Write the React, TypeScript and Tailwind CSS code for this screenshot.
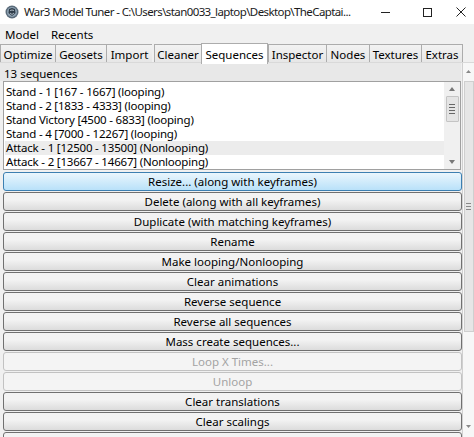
import React from "react";

const tabs = [
  { label: "Optimize", w: 55 },
  { label: "Geosets", w: 51 },
  { label: "Import", w: 46 },
  { label: "Cleaner", w: 47, ml: 2 },
  { label: "Sequences", w: 67, selected: true },
  { label: "Inspector", w: 58 },
  { label: "Nodes", w: 43 },
  { label: "Textures", w: 52 },
  { label: "Extras", w: 41 },
];

const items = [
  "Stand - 1 [167 - 1667] (looping)",
  "Stand - 2 [1833 - 4333] (looping)",
  "Stand Victory [4500 - 6833] (looping)",
  "Stand - 4 [7000 - 12267] (looping)",
  "Attack - 1 [12500 - 13500] (Nonlooping)",
  "Attack - 2 [13667 - 14667] (Nonlooping)",
];

const buttons: { label: string; state?: "hover" | "disabled" }[] = [
  { label: "Resize... (along with keyframes)", state: "hover" },
  { label: "Delete (along with all keyframes)" },
  { label: "Duplicate (with matching keyframes)" },
  { label: "Rename" },
  { label: "Make looping/Nonlooping" },
  { label: "Clear animations" },
  { label: "Reverse sequence" },
  { label: "Reverse all sequences" },
  { label: "Mass create sequences..." },
  { label: "Loop X Times...", state: "disabled" },
  { label: "Unloop", state: "disabled" },
  { label: "Clear translations" },
  { label: "Clear scalings" },
  { label: "Clear rotations" },
];

function AppIcon() {
  return (
    <svg width="14" height="14" viewBox="0 0 14 14">
      <circle cx="7" cy="7" r="6.5" fill="#5a6b7a" />
      <circle cx="7" cy="7" r="5" fill="#8fa3b3" />
      <path d="M4 4 L7 3 L10 4 L10.5 8 L7 11 L3.5 8 Z" fill="#2f3d4a" />
      <path d="M5 5.5 L7 5 L9 5.5 M5 8 L7 9.5 L9 8" stroke="#c9d6e0" strokeWidth="0.8" fill="none" />
    </svg>
  );
}

function Btn({ label, state }: { label: string; state?: "hover" | "disabled" }) {
  if (state === "hover") {
    return (
      <div className="h-[19px] shrink-0 rounded-[3px] border border-[#3c7fb1] bg-gradient-to-b from-[#eaf6fd] to-[#b9e1f9] flex items-center justify-center text-[#000] leading-none">
        {label}
      </div>
    );
  }
  if (state === "disabled") {
    return (
      <div className="h-[19px] shrink-0 rounded-[3px] border border-[#c2c2c2] bg-[#f4f4f4] flex items-center justify-center text-[#a3a3a3] leading-none">
        {label}
      </div>
    );
  }
  return (
    <div className="h-[19px] shrink-0 rounded-[3px] border border-[#707070] bg-gradient-to-b from-[#f3f3f3] from-40% to-[#dcdcdc] flex items-center justify-center text-[#000] leading-none">
      {label}
    </div>
  );
}

export default function App() {
  return (
    <div
      className="w-[474px] h-[437px] overflow-hidden bg-[#f0f0f0] text-[11.5px] text-black flex flex-col"
      style={{ fontFamily: '"Noto Sans", "Open Sans", sans-serif' }}
    >
      {/* title bar */}
      <div className="h-[24px] shrink-0 bg-white flex items-center">
        <div className="ml-[5px] mr-[5px] flex items-center"><AppIcon /></div>
        <div className="text-[11.5px] text-[#1a1a1a] whitespace-nowrap tracking-[-0.6px]">
          War3 Model Tuner - C:\Users\stan0033_laptop\Desktop\TheCaptai...
        </div>
        <div className="flex-1" />
        <div className="w-[42px] flex items-center justify-center">
          <div className="w-[9px] h-[1px] bg-[#222]" />
        </div>
        <div className="w-[42px] flex items-center justify-center">
          <div className="w-[9px] h-[9px] border border-[#222]" />
        </div>
        <div className="w-[26px] flex items-center justify-center">
          <svg width="10" height="10" viewBox="0 0 10 10">
            <path d="M0.5 0.5 L9.5 9.5 M9.5 0.5 L0.5 9.5" stroke="#222" strokeWidth="1" />
          </svg>
        </div>
      </div>

      {/* menu bar */}
      <div className="h-[18px] shrink-0 flex items-center bg-[#f0f0f0] pt-[3px]">
        <span className="ml-[5px]">Model</span>
        <span className="ml-[12px]">Recents</span>
      </div>

      {/* tabs */}
      <div className="h-[21px] shrink-0 flex items-end relative">
        {tabs.map((t) =>
          t.selected ? (
            <div
              key={t.label}
              style={{ width: t.w }}
              className="h-[21px] bg-white border border-b-0 border-[#acacac] flex items-center justify-center relative z-10 -mb-[1px] pt-[2px]"
            >
              {t.label}
            </div>
          ) : (
            <div
              key={t.label}
              style={{ width: t.w, marginLeft: t.ml ?? 0 }}
              className="h-[19px] bg-gradient-to-b from-[#f2f2f2] to-[#e6e6e6] border border-r-0 border-b-0 border-[#acacac] flex items-center justify-center pt-[2px]"
            >
              {t.label}
            </div>
          )
        )}
        <div className="h-[19px] border-l border-[#acacac]" />
        <div className="absolute left-0 right-0 bottom-0 h-[1px] bg-[#d9d9d9]" />
      </div>

      {/* content */}
      <div className="flex-1 flex min-h-0">
        <div className="flex-1 flex flex-col min-w-0 pl-[3px] pr-[1px]">
          <div className="h-[18px] shrink-0 bg-[#e8e8e8] -ml-[3px] pl-[4px] flex items-center pt-[4px] leading-[14px]">13 sequences</div>
          <div className="h-[89px] shrink-0 bg-white border border-[#a0a0a0] flex">
            <div className="flex-1 pt-[3px] pl-[1px]">
              {items.map((it, i) => (
                <div
                  key={it}
                  className={`h-[14px] leading-[14px] text-[11.5px] tracking-[-0.2px] pl-[1px] whitespace-nowrap ${i === 4 ? "bg-[#ececec]" : ""}`}
                >
                  {it}
                </div>
              ))}
            </div>
            <div className="w-[16px] bg-[#f0f0f0] flex flex-col items-center">
              <div className="h-[14px] flex items-center justify-center">
                <svg width="6" height="4" viewBox="0 0 6 4"><path d="M0 4 L3 0 L6 4 Z" fill="#777" /></svg>
              </div>
              <div className="w-[13px] h-[26px] bg-[#e4e4e4] border border-[#c4c4c4] rounded-[1px] flex flex-col items-center justify-center gap-[2px]">
                <div className="w-[6px] h-[1px] bg-[#666]" />
                <div className="w-[6px] h-[1px] bg-[#666]" />
                <div className="w-[6px] h-[1px] bg-[#666]" />
                <div className="w-[6px] h-[1px] bg-[#666]" />
              </div>
              <div className="flex-1" />
              <div className="h-[14px] flex items-center justify-center">
                <svg width="6" height="4" viewBox="0 0 6 4"><path d="M0 0 L3 4 L6 0 Z" fill="#777" /></svg>
              </div>
            </div>
          </div>
          <div className="flex flex-col gap-[1px] mt-[2px] -mr-[1px]">
            {buttons.map((b) => (
              <Btn key={b.label} label={b.label} state={b.state} />
            ))}
          </div>
        </div>

        {/* outer scrollbar */}
        <div className="w-[12px] shrink-0 border-l border-[#d0d0d0] bg-[#f7f7f7] flex flex-col items-center">
          <div className="h-[16px] flex items-center justify-center">
            <svg width="5" height="3" viewBox="0 0 5 3"><path d="M0 3 L2.5 0 L5 3 Z" fill="#888" /></svg>
          </div>
          <div className="w-[10px] h-[251px] mt-[2px] bg-[#e6e6e6] border border-[#cfcfcf] flex flex-col items-center justify-center gap-[2px]">
            <div className="w-[5px] h-[1px] bg-[#888]" />
            <div className="w-[5px] h-[1px] bg-[#888]" />
            <div className="w-[5px] h-[1px] bg-[#888]" />
          </div>
          <div className="flex-1" />
          <div className="h-[12px] flex items-start justify-center">
            <svg width="5" height="3" viewBox="0 0 5 3"><path d="M0 0 L2.5 3 L5 0 Z" fill="#888" /></svg>
          </div>
        </div>
      </div>
    </div>
  );
}
